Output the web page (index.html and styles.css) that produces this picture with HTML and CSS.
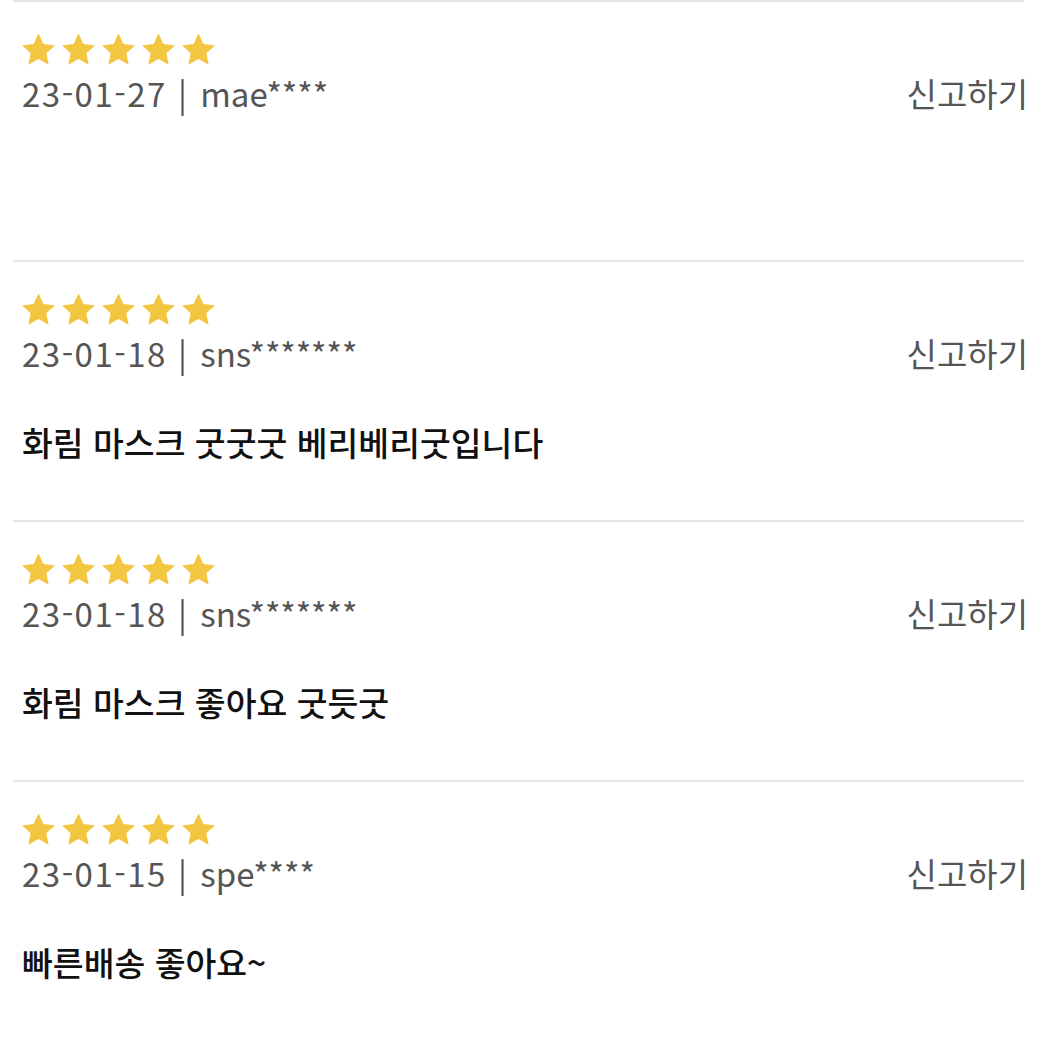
FILE: index.html
```html
<!DOCTYPE html>
<html lang="ko">
<head>
    <meta charset="UTF-8">
    <meta name="viewport" content="width=device-width, initial-scale=1.0">
    <title>상품 리뷰</title>
    <link rel="stylesheet" href="styles.css">
</head>
<body>
    <ul class="review-list">
        <li class="review">
            <div class="stars">
                <svg viewBox="0 0 24 24"><path d="M12 1.8L15.06 8.59 22.46 9.4 16.95 14.41 18.47 21.7 12 18 5.53 21.7 7.05 14.41 1.54 9.4 8.94 8.59Z"/></svg>
                <svg viewBox="0 0 24 24"><path d="M12 1.8L15.06 8.59 22.46 9.4 16.95 14.41 18.47 21.7 12 18 5.53 21.7 7.05 14.41 1.54 9.4 8.94 8.59Z"/></svg>
                <svg viewBox="0 0 24 24"><path d="M12 1.8L15.06 8.59 22.46 9.4 16.95 14.41 18.47 21.7 12 18 5.53 21.7 7.05 14.41 1.54 9.4 8.94 8.59Z"/></svg>
                <svg viewBox="0 0 24 24"><path d="M12 1.8L15.06 8.59 22.46 9.4 16.95 14.41 18.47 21.7 12 18 5.53 21.7 7.05 14.41 1.54 9.4 8.94 8.59Z"/></svg>
                <svg viewBox="0 0 24 24"><path d="M12 1.8L15.06 8.59 22.46 9.4 16.95 14.41 18.47 21.7 12 18 5.53 21.7 7.05 14.41 1.54 9.4 8.94 8.59Z"/></svg>
            </div>
            <div class="meta">
                <span><span class="date">23-01-27</span> <span class="bar">|</span> mae****</span>
                <a href="#" class="report">신고하기</a>
            </div>
            <p class="text"></p>
        </li>
        <li class="review">
            <div class="stars">
                <svg viewBox="0 0 24 24"><path d="M12 1.8L15.06 8.59 22.46 9.4 16.95 14.41 18.47 21.7 12 18 5.53 21.7 7.05 14.41 1.54 9.4 8.94 8.59Z"/></svg>
                <svg viewBox="0 0 24 24"><path d="M12 1.8L15.06 8.59 22.46 9.4 16.95 14.41 18.47 21.7 12 18 5.53 21.7 7.05 14.41 1.54 9.4 8.94 8.59Z"/></svg>
                <svg viewBox="0 0 24 24"><path d="M12 1.8L15.06 8.59 22.46 9.4 16.95 14.41 18.47 21.7 12 18 5.53 21.7 7.05 14.41 1.54 9.4 8.94 8.59Z"/></svg>
                <svg viewBox="0 0 24 24"><path d="M12 1.8L15.06 8.59 22.46 9.4 16.95 14.41 18.47 21.7 12 18 5.53 21.7 7.05 14.41 1.54 9.4 8.94 8.59Z"/></svg>
                <svg viewBox="0 0 24 24"><path d="M12 1.8L15.06 8.59 22.46 9.4 16.95 14.41 18.47 21.7 12 18 5.53 21.7 7.05 14.41 1.54 9.4 8.94 8.59Z"/></svg>
            </div>
            <div class="meta">
                <span><span class="date">23-01-18</span> <span class="bar">|</span> sns*******</span>
                <a href="#" class="report">신고하기</a>
            </div>
            <p class="text">화림 마스크 굿굿굿 베리베리굿입니다</p>
        </li>
        <li class="review">
            <div class="stars">
                <svg viewBox="0 0 24 24"><path d="M12 1.8L15.06 8.59 22.46 9.4 16.95 14.41 18.47 21.7 12 18 5.53 21.7 7.05 14.41 1.54 9.4 8.94 8.59Z"/></svg>
                <svg viewBox="0 0 24 24"><path d="M12 1.8L15.06 8.59 22.46 9.4 16.95 14.41 18.47 21.7 12 18 5.53 21.7 7.05 14.41 1.54 9.4 8.94 8.59Z"/></svg>
                <svg viewBox="0 0 24 24"><path d="M12 1.8L15.06 8.59 22.46 9.4 16.95 14.41 18.47 21.7 12 18 5.53 21.7 7.05 14.41 1.54 9.4 8.94 8.59Z"/></svg>
                <svg viewBox="0 0 24 24"><path d="M12 1.8L15.06 8.59 22.46 9.4 16.95 14.41 18.47 21.7 12 18 5.53 21.7 7.05 14.41 1.54 9.4 8.94 8.59Z"/></svg>
                <svg viewBox="0 0 24 24"><path d="M12 1.8L15.06 8.59 22.46 9.4 16.95 14.41 18.47 21.7 12 18 5.53 21.7 7.05 14.41 1.54 9.4 8.94 8.59Z"/></svg>
            </div>
            <div class="meta">
                <span><span class="date">23-01-18</span> <span class="bar">|</span> sns*******</span>
                <a href="#" class="report">신고하기</a>
            </div>
            <p class="text">화림 마스크 좋아요 굿듯굿</p>
        </li>
        <li class="review">
            <div class="stars">
                <svg viewBox="0 0 24 24"><path d="M12 1.8L15.06 8.59 22.46 9.4 16.95 14.41 18.47 21.7 12 18 5.53 21.7 7.05 14.41 1.54 9.4 8.94 8.59Z"/></svg>
                <svg viewBox="0 0 24 24"><path d="M12 1.8L15.06 8.59 22.46 9.4 16.95 14.41 18.47 21.7 12 18 5.53 21.7 7.05 14.41 1.54 9.4 8.94 8.59Z"/></svg>
                <svg viewBox="0 0 24 24"><path d="M12 1.8L15.06 8.59 22.46 9.4 16.95 14.41 18.47 21.7 12 18 5.53 21.7 7.05 14.41 1.54 9.4 8.94 8.59Z"/></svg>
                <svg viewBox="0 0 24 24"><path d="M12 1.8L15.06 8.59 22.46 9.4 16.95 14.41 18.47 21.7 12 18 5.53 21.7 7.05 14.41 1.54 9.4 8.94 8.59Z"/></svg>
                <svg viewBox="0 0 24 24"><path d="M12 1.8L15.06 8.59 22.46 9.4 16.95 14.41 18.47 21.7 12 18 5.53 21.7 7.05 14.41 1.54 9.4 8.94 8.59Z"/></svg>
            </div>
            <div class="meta">
                <span><span class="date">23-01-15</span> <span class="bar">|</span> spe****</span>
                <a href="#" class="report">신고하기</a>
            </div>
            <p class="text">빠른배송 좋아요~</p>
        </li>
    </ul>
</body>
</html>
```

FILE: styles.css
```css
body {
    font-family: 'Noto Sans CJK KR', 'Noto Sans', sans-serif;
    background-color: #fff;
    margin: 0;
    padding: 0;
}

.review-list {
    list-style: none;
    margin: 0;
    padding: 0 15px 0 13px;
}

.review {
    border-top: 2px solid #e6e6e6;
    height: 260px;
    padding-top: 30px;
    box-sizing: border-box;
}

.stars {
    display: flex;
    gap: 5px;
    padding-left: 8px;
    height: 35px;
}

.stars svg {
    width: 35px;
    height: 35px;
    fill: #f3c641;
    stroke: #f3c641;
    stroke-width: 0.8;
    stroke-linejoin: round;
}

.meta {
    display: flex;
    justify-content: space-between;
    align-items: baseline;
    padding-left: 9px;
    margin-top: 4px;
    margin-right: -4px;
    font-size: 33px;
    line-height: 44px;
    color: #555;
}

.meta .date {
    letter-spacing: 1.5px;
}

.meta .bar {
    margin: 0 4px 0 2px;
}

.report {
    color: #555;
    text-decoration: none;
}

.text {
    margin: 44px 0 0 9px;
    font-size: 33.5px;
    line-height: 46px;
    font-weight: 500;
    color: #111;
}
```
